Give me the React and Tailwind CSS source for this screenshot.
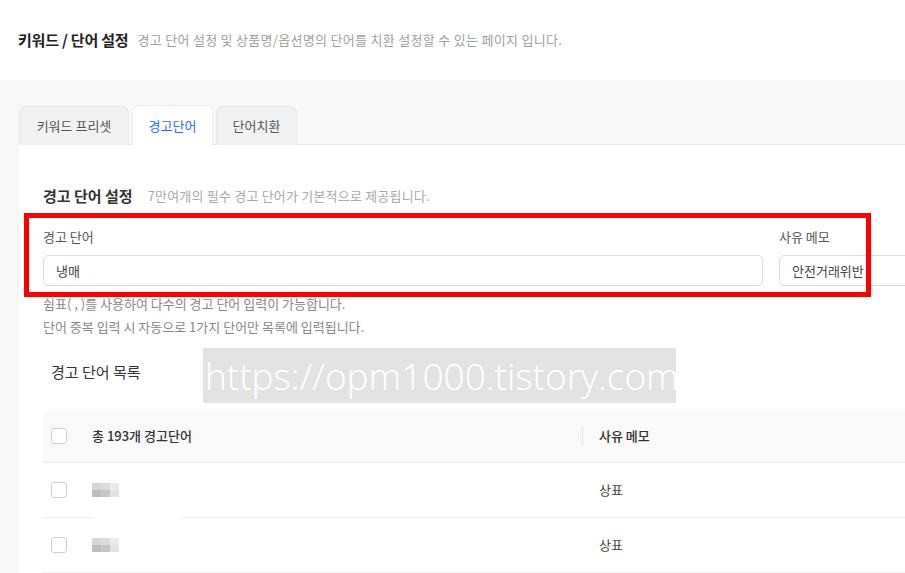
const font = { fontFamily: '"Noto Sans CJK KR", "Noto Sans", sans-serif' }

function Checkbox() {
  return <span className="block w-[16px] h-[16px] rounded-[3px] border border-[#cfcfcf] bg-white" />
}

function Blurred() {
  return (
    <div className="grid grid-cols-[9px_9px_9px] grid-rows-[7px_7px]">
      <span className="bg-[#d6d6d6]" />
      <span className="bg-[#dcdcdc]" />
      <span className="bg-[#ebebeb]" />
      <span className="bg-[#bdbdbd]" />
      <span className="bg-[#c6c6c6]" />
      <span className="bg-[#e2e2e2]" />
    </div>
  )
}

export default function App() {
  const tabs = [
    { label: '키워드 프리셋', w: 'w-[110px]' },
    { label: '경고단어', w: 'w-[81px]', active: true },
    { label: '단어치환', w: 'w-[81px]' },
  ]
  const rows = [{ memo: '상표' }, { memo: '상표' }]

  return (
    <div className="relative w-[905px] h-[573px] overflow-hidden bg-[#f8f8f8]" style={font}>
      <header className="h-[80px] bg-white flex items-center pl-[18px] gap-[9px]">
        <h1 className="text-[15px] font-bold text-[#222] tracking-[-0.2px]">키워드 / 단어 설정</h1>
        <p className="text-[13px] tracking-[0.3px] text-[#a0a0a0]">경고 단어 설정 및 상품명/옵션명의 단어를 치환 설정할 수 있는 페이지 입니다.</p>
      </header>

      <div className="pl-[19px] pt-[25px]">
        <div className="flex items-end gap-[3px] border-b border-[#e6e6e6] w-[1100px]">
          {tabs.map((t) => (
            <div
              key={t.label}
              className={`${t.w} h-[39px] flex items-center justify-center rounded-t-[7px] border border-b-0 text-[13px] -mb-px ${
                t.active ? 'bg-white border-[#ececec] text-[#1e6bff] h-[40px]' : 'bg-[#f2f2f2] border-[#e8e8e8] text-[#555]'
              }`}
            >
              {t.label}
            </div>
          ))}
        </div>

        <div className="bg-white w-[1100px] pl-[24px] pt-[41px] h-[500px]">
          <div className="flex items-center gap-[15px] h-[20px]">
            <h2 className="text-[15px] font-bold text-[#333]">경고 단어 설정</h2>
            <span className="text-[13px] tracking-[0.2px] text-[#aaa]">7만여개의 필수 경고 단어가 기본적으로 제공됩니다.</span>
          </div>

          <div className="flex gap-[16px] mt-[22px]">
            <div className="w-[720px]">
              <label className="block text-[13px] leading-[18px] text-[#555]">경고 단어</label>
              <div className="mt-[9px] h-[31px] rounded-[5px] border border-[#dcdcdc] px-[12px] flex items-center text-[13px] text-[#444]">냉매</div>
            </div>
            <div className="w-[220px]">
              <label className="block text-[13px] leading-[18px] text-[#555]">사유 메모</label>
              <div className="mt-[9px] h-[31px] rounded-[5px] border border-[#dcdcdc] px-[12px] flex items-center text-[13px] text-[#444]">안전거래위반</div>
            </div>
          </div>

          <div className="mt-[6px] text-[13px] leading-[23px] text-[#888]">
            <p>쉼표( , )를 사용하여 다수의 경고 단어 입력이 가능합니다.</p>
            <p>단어 중복 입력 시 자동으로 1가지 단어만 목록에 입력됩니다.</p>
          </div>

          <h3 className="mt-[24px] pl-[8px] text-[15px] leading-[20px] text-[#333]">경고 단어 목록</h3>

          <div className="mt-[27px] w-[1000px]">
            <div className="h-[54px] bg-[#f9f9f9] rounded-t-[8px] border-b border-[#ececec] flex items-center">
              <div className="w-[539px] flex items-center pl-[8px] gap-[25px]">
                <Checkbox />
                <span className="text-[13px] font-medium text-[#333]">총 193개 경고단어</span>
              </div>
              <span className="w-px h-[22px] bg-[#e6e6e6]" />
              <span className="pl-[16px] text-[13px] font-medium text-[#333]">사유 메모</span>
            </div>
            {rows.map((r, i) => (
              <div key={i} className="relative h-[55px] border-b border-[#ececec] flex items-center">
                <div className="w-[540px] flex items-center pl-[8px] gap-[25px]">
                  <Checkbox />
                  <Blurred />
                </div>
                <span className="pl-[16px] text-[13px] text-[#444]">{r.memo}</span>
                {i === 0 && <span className="absolute left-[50px] bottom-[-4px] w-[88px] h-[6px] bg-white" />}
              </div>
            ))}
          </div>
        </div>
      </div>

      <div className="absolute left-[24px] top-[213px] w-[847px] h-[84px] border-[5px] border-[#ff0000]" />

      <div
        className="absolute left-[203px] top-[348px] w-[473px] h-[55px] bg-[#e3e3e3] flex items-center pl-[2px] text-white text-[37px] font-light"
        style={{ fontFamily: '"Open Sans", sans-serif' }}
      >
        https://opm1000.tistory.com
      </div>
    </div>
  )
}
